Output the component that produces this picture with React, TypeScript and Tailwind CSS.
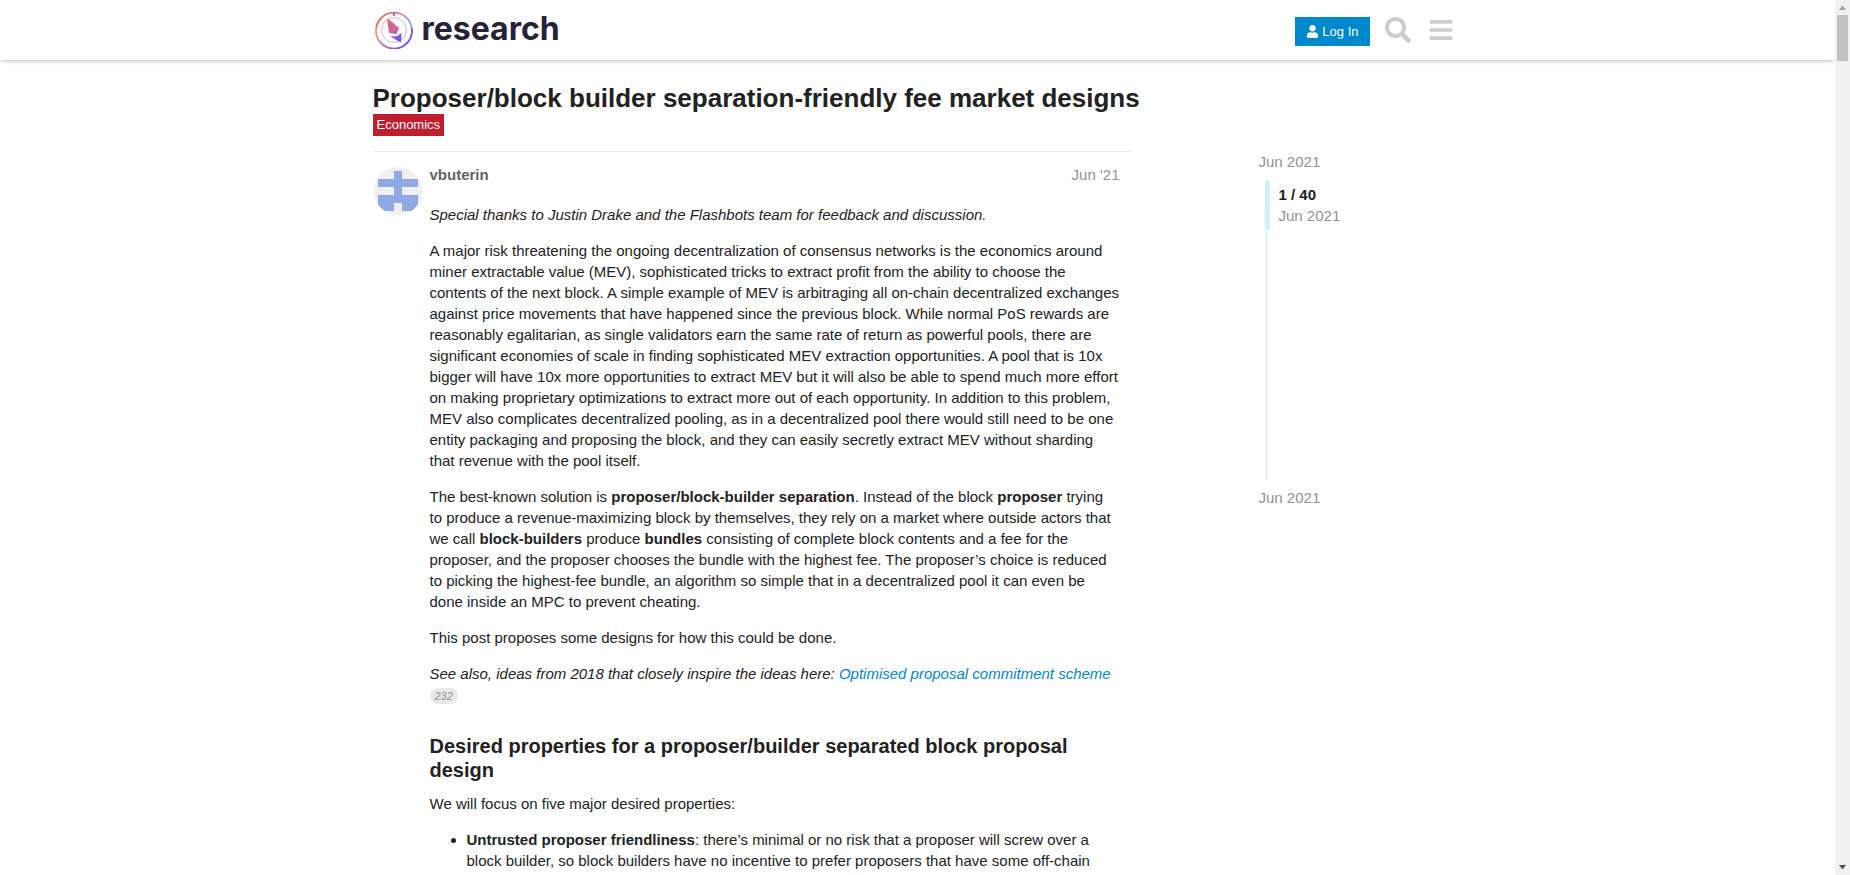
import React from "react";
import { FaUser, FaSearch, FaBars } from "react-icons/fa";

function Logo() {
  return (
    <svg viewBox="0 0 38 38" className="size-[38px]" fill="none" aria-hidden="true">
      <defs>
        <linearGradient id="ring" x1="6" y1="8" x2="32" y2="30" gradientUnits="userSpaceOnUse">
          <stop offset="0" stopColor="#f4705f" />
          <stop offset="0.5" stopColor="#c890d0" />
          <stop offset="1" stopColor="#6a5cf5" />
        </linearGradient>
        <linearGradient id="top" x1="10" y1="1" x2="37" y2="19" gradientUnits="userSpaceOnUse">
          <stop offset="0" stopColor="#f0655f" />
          <stop offset="0.5" stopColor="#c988b4" />
          <stop offset="1" stopColor="#7cb4f2" />
        </linearGradient>
        <linearGradient id="bottom" x1="2" y1="14" x2="36" y2="28" gradientUnits="userSpaceOnUse">
          <stop offset="0" stopColor="#f6a05c" />
          <stop offset="0.45" stopColor="#cc62a8" />
          <stop offset="1" stopColor="#5f50f8" />
        </linearGradient>
        <linearGradient id="gem" x1="13" y1="8" x2="26" y2="31" gradientUnits="userSpaceOnUse">
          <stop offset="0" stopColor="#f0645f" />
          <stop offset="0.5" stopColor="#cf62a4" />
          <stop offset="1" stopColor="#5b4df5" />
        </linearGradient>
      </defs>
      <path d="M1.200 17A18 18 0 0 1 36.800 17" stroke="url(#top)" strokeWidth="1.800" />
      <path d="M36.800 17A18 18 0 1 1 1.200 17" stroke="url(#bottom)" strokeWidth="1.800" />
      <circle cx="19" cy="19" r="12.300" stroke="url(#ring)" strokeWidth="1.500" opacity="0.4" />
      <path d="M19 1v4" stroke="#d9607c" strokeWidth="2" />
      <path d="M12 7L24 17L21.500 23L14 22Z" fill="url(#gem)" />
      <path d="M15 25.500L22.500 25L26.500 21.500L26 31.500Z" fill="url(#gem)" />
    </svg>
  );
}

function Avatar() {
  return (
    <svg viewBox="0 0 48 48" className="size-12 shrink-0" role="img" aria-label="vbuterin">
      <clipPath id="round">
        <circle cx="24" cy="24" r="24" />
      </clipPath>
      <g clipPath="url(#round)">
        <rect width="48" height="48" fill="#f0f0f0" />
        <path d="M20 4h8v8h16v8H28v8h16v16H28v-8h-8v8H4V28h16v-8H4v-8h16z" fill="#8ea9e6" />
      </g>
    </svg>
  );
}

function Header() {
  return (
    <header className="relative z-10 h-15 shrink-0 bg-white shadow-[0_2px_4px_-1px_rgba(0,0,0,0.25)]">
      <div className="mx-auto flex h-full max-w-[1110px] items-center justify-between px-[10px]">
        <a href="#top" className="flex items-center gap-[9px] pl-0.5 font-['Inter',sans-serif] text-[32px] leading-9 font-bold text-[#25223a]">
          <Logo />
          <span className="pb-0.5">research</span>
        </a>
        <div className="flex items-center pt-0.5">
          <button className="mr-[7px] flex h-[29px] items-center gap-[3px] bg-[#0088cc] px-[11px] text-[13px] text-white">
            <FaUser className="size-[13px]" />
            Log In
          </button>
          <button aria-label="Search" className="flex h-10 w-[43px] items-center justify-center pb-0.5 text-[#cccccc]">
            <FaSearch className="size-[26px]" />
          </button>
          <button aria-label="Menu" className="flex h-10 w-[43px] items-center justify-center pb-0.5 text-[#cccccc]">
            <FaBars className="size-[26px]" />
          </button>
        </div>
      </div>
    </header>
  );
}

function Post() {
  return (
    <article className="flex min-w-0 flex-1 gap-2 border-t border-[#e9e9e9] pt-[15px]">
      <Avatar />
      <div className="-mt-[3px] min-w-0 flex-1 pr-[11px]">
        <div className="mb-[19px] flex justify-between">
          <a href="#vbuterin" className="font-bold text-[#646464]">vbuterin</a>
          <a href="#post-1" className="text-[#919191]">Jun &#39;21</a>
        </div>
        <div className="space-y-[15px]">
          <p className="italic">Special thanks to Justin Drake and the Flashbots team for feedback and discussion.</p>
          <p>
            A major risk threatening the ongoing decentralization of consensus networks is the economics around miner
            extractable value (MEV), sophisticated tricks to extract profit from the ability to choose the contents of the
            next block. A simple example of MEV is arbitraging all on-chain decentralized exchanges against price movements
            that have happened since the previous block. While normal PoS rewards are reasonably egalitarian, as single
            validators earn the same rate of return as powerful pools, there are significant economies of scale in finding
            sophisticated MEV extraction opportunities. A pool that is 10x bigger will have 10x more opportunities to
            extract MEV but it will also be able to spend much more effort on making proprietary optimizations to extract
            more out of each opportunity. In addition to this problem, MEV also complicates decentralized pooling, as in a
            decentralized pool there would still need to be one entity packaging and proposing the block, and they can
            easily secretly extract MEV without sharding that revenue with the pool itself.
          </p>
          <p>
            The best-known solution is <strong>proposer/block-builder separation</strong>. Instead of the block{" "}
            <strong>proposer</strong> trying to produce a revenue-maximizing block by themselves, they rely on a market
            where outside actors that we call <strong>block-builders</strong> produce <strong>bundles</strong> consisting
            of complete block contents and a fee for the proposer, and the proposer chooses the bundle with the highest
            fee. The proposer’s choice is reduced to picking the highest-fee bundle, an algorithm so simple that in a
            decentralized pool it can even be done inside an MPC to prevent cheating.
          </p>
          <p>This post proposes some designs for how this could be done.</p>
          <p className="italic">
            See also, ideas from 2018 that closely inspire the ideas here:{" "}
            <a href="#optimised-proposal" className="text-[#0088cc]">Optimised proposal commitment scheme</a>{" "}
            <span className="inline-block rounded-[10px] bg-[#e9e9e9] px-[5px] align-middle text-[11px] leading-4 text-[#919191]">
              232
            </span>
          </p>
        </div>
        <h2 className="mt-[29px] mb-[11px] text-[20px] leading-6 font-bold">
          Desired properties for a proposer/builder separated block proposal design
        </h2>
        <p>We will focus on five major desired properties:</p>
        <ul className="mt-[15px] list-disc pl-[37px]">
          <li>
            <strong>Untrusted proposer friendliness</strong>: there’s minimal or no risk that a proposer will screw over a
            block builder, so block builders have no incentive to prefer proposers that have some off-chain
          </li>
        </ul>
      </div>
    </article>
  );
}

function Timeline() {
  return (
    <aside className="w-[204px] shrink-0 text-[#919191]">
      <a href="#first" className="block">Jun 2021</a>
      <div className="mt-2 mb-[7px] ml-[7px] h-[300px] border-l border-[#d1f0ff]">
        <div className="-ml-0.5 flex h-[50px] items-center gap-[9px]">
          <div className="h-full w-[5px] rounded-full bg-[#d1f0ff]" />
          <div>
            <div className="font-bold text-[#222222]">1 / 40</div>
            <div>Jun 2021</div>
          </div>
        </div>
      </div>
      <a href="#last" className="block">Jun 2021</a>
    </aside>
  );
}

function Scrollbar() {
  return (
    <div className="flex w-[15px] shrink-0 flex-col items-center bg-[#f1f1f1]" aria-hidden="true">
      <svg viewBox="0 0 15 15" className="size-[15px]"><path d="M7.500 5.500L11 10H4z" fill="#a3a3a3" /></svg>
      <div className="h-[46px] w-[11px] bg-[#c1c1c1]" />
      <svg viewBox="0 0 15 15" className="mt-auto size-[15px]"><path d="M4 5h7L7.500 9.500z" fill="#505050" /></svg>
    </div>
  );
}

export default function App() {
  return (
    <div className="flex h-screen overflow-hidden bg-white font-['Liberation_Sans',Arial,sans-serif] text-[15px] leading-[21px] text-[#222222]">
      <div className="flex min-w-0 flex-1 flex-col overflow-hidden">
        <Header />
        <main className="mx-auto w-full max-w-[1110px] px-[10px] pt-[22px]">
          <h1 className="text-[26px] leading-8 font-bold">Proposer/block builder separation-friendly fee market designs</h1>
          <a href="#economics" className="block w-fit bg-[#bf1e2e] px-1 text-[13px] leading-[22px] text-white">
            Economics
          </a>
          <div className="mt-[15px] flex justify-between gap-32 pl-px">
            <Post />
            <Timeline />
          </div>
        </main>
      </div>
      <Scrollbar />
    </div>
  );
}
